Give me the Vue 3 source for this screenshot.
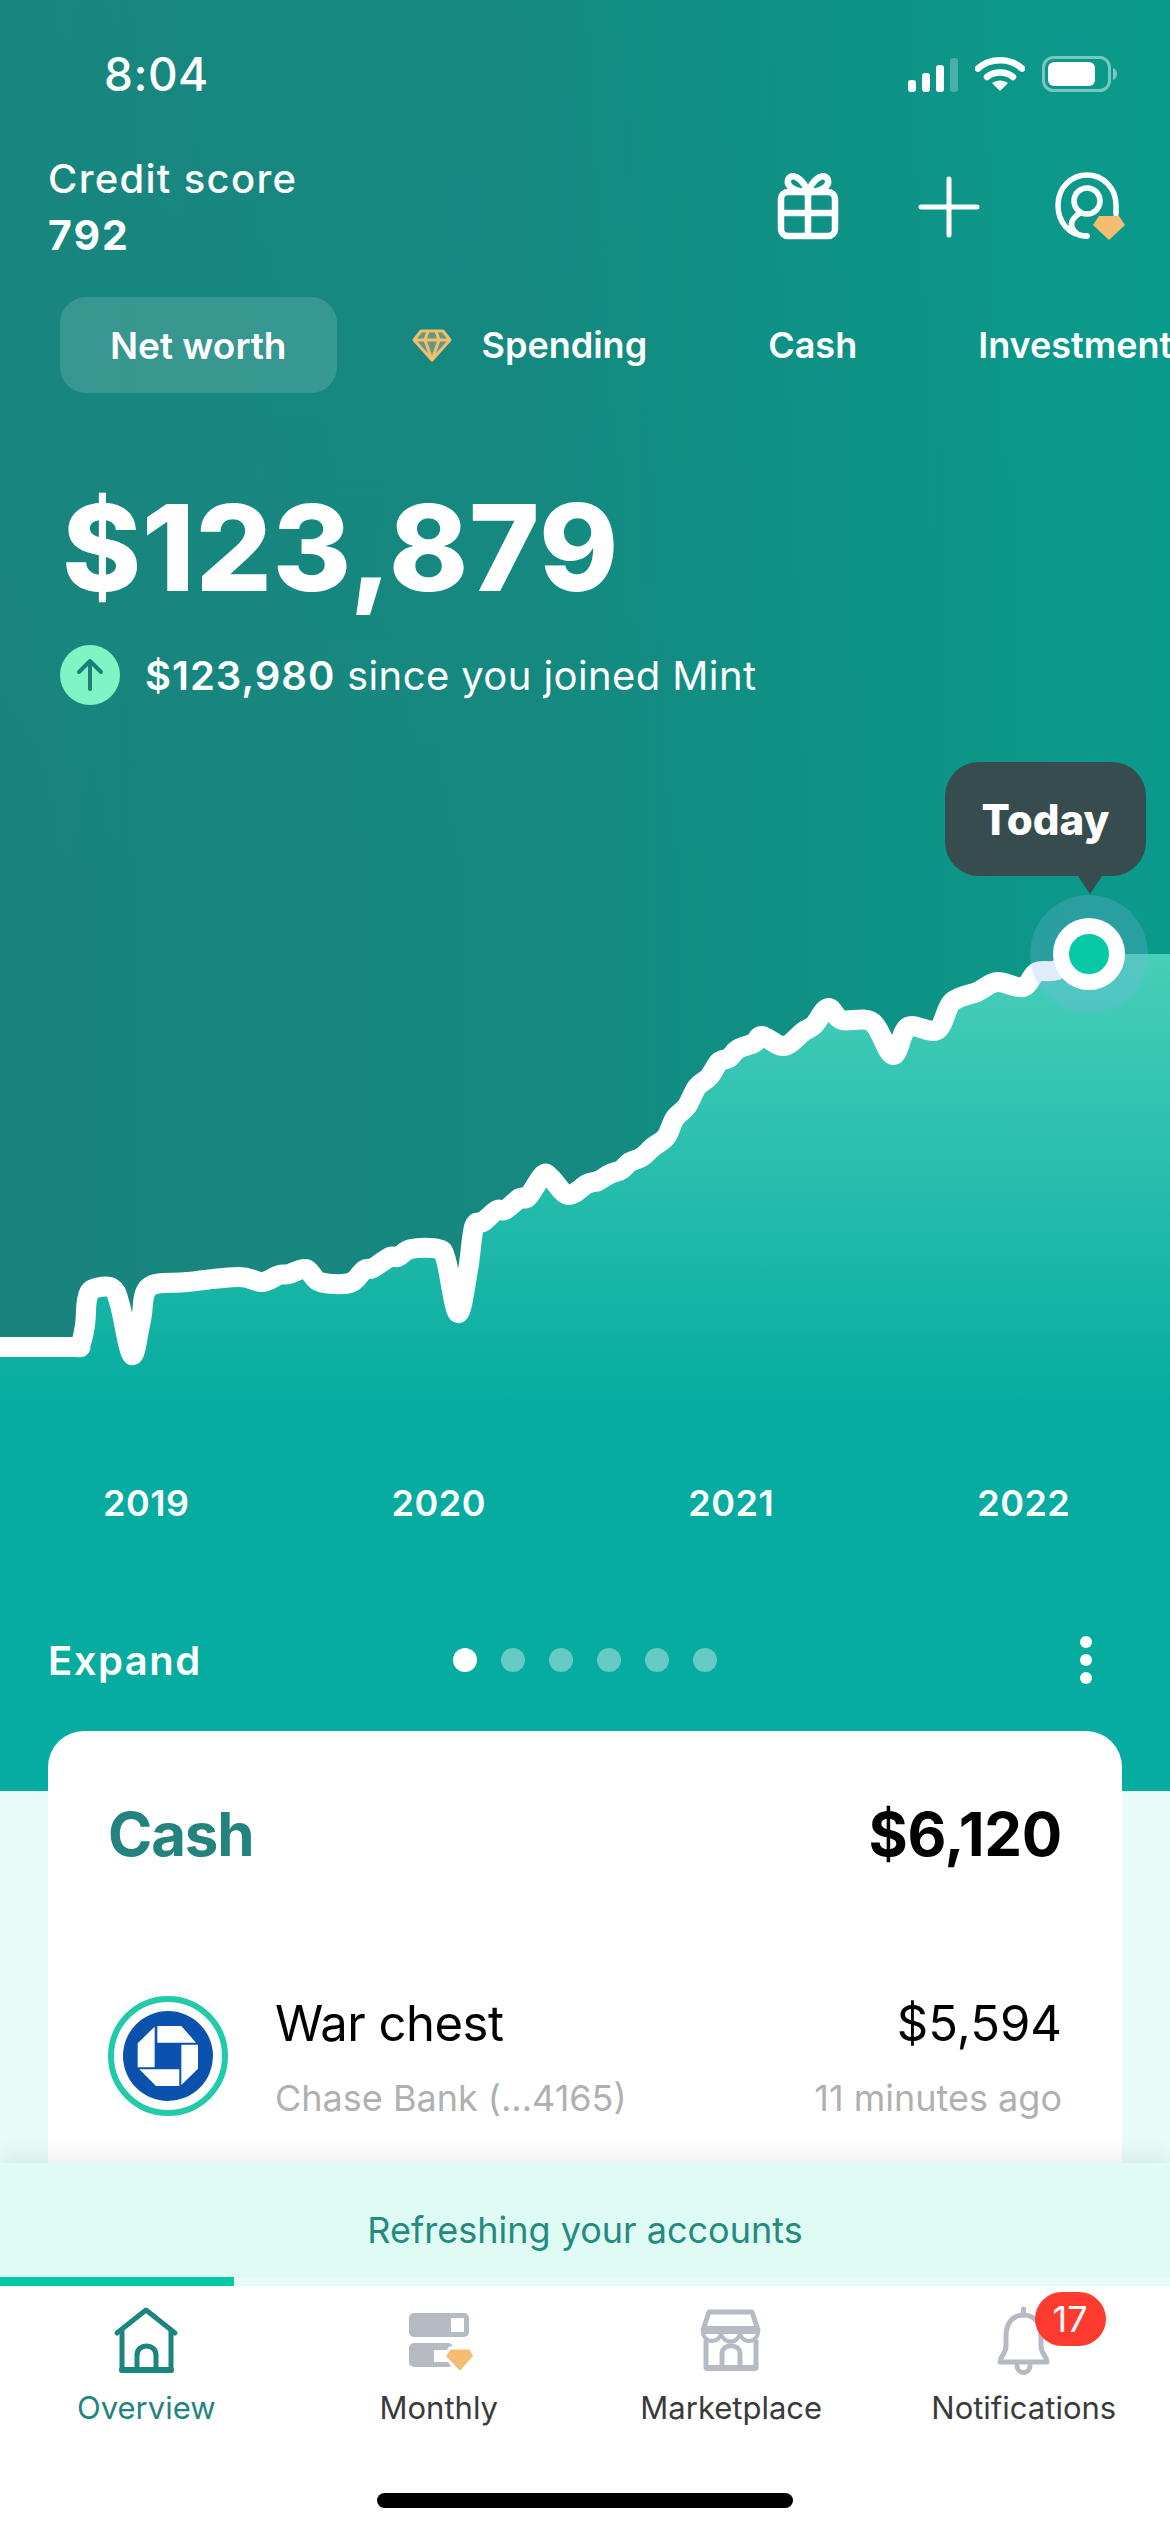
<script setup>
import { computed } from 'vue'

const points = [
  [-20,1347],[70,1347],[80,1345],[85,1325],[87,1300],[93,1289],[112,1288],[120,1305],[132,1355],[141,1320],[149,1287],[187,1282],[239,1277],[262,1282],[279,1275],[289,1274],[306,1269],[320,1282],[350,1283],[364,1270],[373,1268],[390,1257],[398,1257],[411,1249],[438,1249],[446,1260],[458,1313],[468,1270],[474,1227],[483,1222],[497,1210],[505,1210],[520,1198],[528,1197],[543,1175],[551,1178],[568,1195],[587,1184],[598,1181],[610,1174],[621,1170],[630,1162],[642,1157],[653,1147],[666,1137],[675,1118],[687,1106],[697,1087],[709,1077],[719,1062],[729,1058],[738,1049],[754,1043],[762,1036],[784,1046],[803,1032],[814,1025],[828,1008],[842,1020],[872,1022],[893,1055],[908,1027],[937,1030],[952,1002],[977,992],[997,982],[1023,987],[1037,972],[1057,970],[1089,954]
]

const linePath = computed(() => {
  const p = points
  let d = `M${p[0][0]} ${p[0][1]}`
  for (let i = 0; i < p.length - 1; i++) {
    const a = p[Math.max(0, i - 1)], b = p[i], c = p[i + 1], e = p[Math.min(p.length - 1, i + 2)]
    const c1 = [b[0] + (c[0] - a[0]) / 6, b[1] + (c[1] - a[1]) / 6]
    const c2 = [c[0] - (e[0] - b[0]) / 6, c[1] - (e[1] - b[1]) / 6]
    d += `C${c1[0].toFixed(1)} ${c1[1].toFixed(1)} ${c2[0].toFixed(1)} ${c2[1].toFixed(1)} ${c[0]} ${c[1]}`
  }
  return d
})
const areaPath = computed(() => `${linePath.value}L1190 954L1190 1430L-20 1430Z`)

const years = ['2019', '2020', '2021', '2022']
const dots = [0, 1, 2, 3, 4, 5]
</script>

<template>
  <div class="screen">
    <div class="main">
      <section class="hero">
        <div class="hero-top">
          <div class="status">
            <span class="time">8:04</span>
            <div class="status-icons">
              <svg class="sig" width="50" height="36" viewBox="0 0 50 36">
                <rect x="0" y="24" width="8" height="12" rx="3" fill="#fff"/>
                <rect x="14" y="17" width="8" height="19" rx="3" fill="#fff"/>
                <rect x="28" y="9" width="8" height="27" rx="3" fill="#fff"/>
                <rect x="42" y="2" width="8" height="34" rx="3" fill="#fff" opacity=".25"/>
              </svg>
              <svg width="50" height="36" viewBox="0 0 50 36">
                <path d="M3 12.500C15 1.500 35 1.500 47 12.500" fill="none" stroke="#fff" stroke-width="6.500" stroke-linecap="round"/>
                <path d="M12 21C19 15 31 15 38 21" fill="none" stroke="#fff" stroke-width="6.500" stroke-linecap="round"/>
                <path d="M25 35L17 27C22 23.500 28 23.500 33 27Z" fill="#fff"/>
              </svg>
              <svg width="76" height="36" viewBox="0 0 76 36">
                <rect x="1.500" y="1.500" width="66" height="33" rx="10" fill="none" stroke="#fff" stroke-opacity=".45" stroke-width="3"/>
                <rect x="6" y="6" width="47" height="24" rx="6" fill="#fff"/>
                <path d="M71 12C74 13 75 15.500 75 18C75 20.500 74 23 71 24Z" fill="#fff" opacity=".45"/>
              </svg>
            </div>
          </div>

          <header class="head">
            <div class="score">
              <div class="score-label">Credit score</div>
              <div class="score-value">792</div>
            </div>
            <div class="head-icons">
              <svg width="80" height="80" viewBox="0 0 80 80" fill="none" stroke="#fff" stroke-width="6.500">
                <path d="M40 25C34 10 23 5 20 13C18 21 30 25 40 25C50 25 62 21 60 13C57 5 46 10 40 25"/>
                <rect x="13" y="25" width="54" height="44" rx="7"/>
                <path d="M13 46H67M40 25V69"/>
              </svg>
              <svg width="80" height="80" viewBox="0 0 80 80" fill="none" stroke="#fff" stroke-width="5" stroke-linecap="round">
                <path d="M12 40H68M40 12V68"/>
              </svg>
              <svg width="80" height="80" viewBox="0 0 80 80" fill="none" stroke="#fff" stroke-width="5.500" stroke-linecap="round">
                <path d="M37 69C18 69 8 54 8 38C8 21 21 8 37 8C53 8 66 21 66 38V47"/>
                <circle cx="37" cy="34" r="13"/>
                <path d="M30 46C24 50 20 55 22 60C24 66 30 69 37 69"/>
                <path d="M49 49H69L75 58L59 73L43 58Z" fill="#f4bd72" stroke="none"/>
              </svg>
            </div>
          </header>

          <nav class="tabs">
            <div class="tab active">Net worth</div>
            <div class="tab">
              <svg class="gem" width="40" height="33" viewBox="0 0 40 33" fill="none" stroke="#f4bd72" stroke-width="3" stroke-linejoin="round">
                <path d="M9 2H31L38 11L20 31L2 11Z" fill="#f4bd72" fill-opacity=".35"/>
                <path d="M2 11H38M13 11L20 31L27 11M13 11L16 2M27 11L24 2"/>
              </svg>
              Spending
            </div>
            <div class="tab">Cash</div>
            <div class="tab">Investments</div>
          </nav>

          <div class="amount">$123,879</div>
          <div class="delta">
            <span class="delta-icon">
              <svg width="36" height="36" viewBox="0 0 36 36" fill="none" stroke="#1b7f76" stroke-width="4" stroke-linecap="round" stroke-linejoin="round">
                <path d="M18 32V5M7 15L18 4L29 15"/>
              </svg>
            </span>
            <span class="delta-text"><b>$123,980</b> since you joined Mint</span>
          </div>

          <div class="chart">
            <svg class="chart-svg" width="1170" height="680" viewBox="0 740 1170 680">
              <defs>
                <linearGradient id="fillGrad" gradientUnits="userSpaceOnUse" x1="0" y1="954" x2="0" y2="1400">
                  <stop offset="0" stop-color="#47cfb9"/>
                  <stop offset="1" stop-color="#07aca0"/>
                </linearGradient>
              </defs>
              <path :d="areaPath" fill="url(#fillGrad)"/>
              <path :d="linePath" fill="none" stroke="#fff" stroke-width="20" stroke-linecap="round" stroke-linejoin="round"/>
              <circle cx="1089" cy="954" r="59" fill="#82b4e6" fill-opacity=".25"/>
              <circle cx="1089" cy="954" r="28" fill="#07c9a6" stroke="#fff" stroke-width="16"/>
            </svg>
            <div class="tooltip">Today</div>
          </div>
        </div>

        <div class="hero-bottom">
          <div class="years">
            <span v-for="y in years" :key="y">{{ y }}</span>
          </div>
          <div class="controls">
            <span class="expand">Expand</span>
            <div class="dots">
              <i v-for="d in dots" :key="d" class="dot" :class="{ on: d === 0 }"></i>
            </div>
            <div class="kebab"><i></i><i></i><i></i></div>
          </div>
        </div>
      </section>

      <section class="card">
        <div class="card-head">
          <span class="card-title">Cash</span>
          <span class="card-total">$6,120</span>
        </div>
        <div class="account">
          <svg class="logo" width="120" height="120" viewBox="84 78 360 360">
            <circle cx="264" cy="258" r="171" fill="#fff" stroke="#1fcba9" stroke-width="18"/>
            <circle cx="264" cy="258" r="135" fill="#0a52ad"/>
            <path d="M232 168H304L348 218H232Z" fill="#fff"/>
            <path d="M354 224V296L304 345V224Z" fill="#fff"/>
            <path d="M298 298V348H228L178 298Z" fill="#fff"/>
            <path d="M224 170V292H173V220Z" fill="#fff"/>
          </svg>
          <div class="acc-body">
            <div class="acc-line">
              <span class="acc-name">War chest</span>
              <span class="acc-value">$5,594</span>
            </div>
            <div class="acc-line sub">
              <span>Chase Bank (...4165)</span>
              <span>11 minutes ago</span>
            </div>
          </div>
        </div>
      </section>
    </div>

    <div class="banner">
      <div class="banner-text">Refreshing your accounts</div>
      <div class="track"><div class="progress"></div></div>
    </div>

    <footer class="nav">
      <div class="nav-row">
        <div class="nav-item current">
          <svg width="70" height="70" viewBox="0 0 70 70" fill="none" stroke="#1c8580" stroke-width="5" stroke-linejoin="round" stroke-linecap="round">
            <path d="M6 27L35 4L64 27"/>
            <path d="M11 25V64H26V49C26 37 45 37 45 49V64H60V25"/>
            <path d="M11 64H60" stroke-width="6"/>
          </svg>
          <span>Overview</span>
        </div>
        <div class="nav-item">
          <svg width="70" height="70" viewBox="0 0 70 70">
            <rect x="5" y="7" width="60" height="24" rx="5" fill="#b6bac3"/>
            <rect x="47" y="12" width="13" height="14" fill="#fff"/>
            <rect x="5" y="37" width="44" height="24" rx="5" fill="#b6bac3"/>
            <rect x="30" y="44" width="22" height="12" fill="#fff"/>
            <path d="M46 42H66L71 50L56 67L40 50Z" fill="#f4bd72" stroke="#fff" stroke-width="3"/>
          </svg>
          <span>Monthly</span>
        </div>
        <div class="nav-item">
          <svg width="70" height="70" viewBox="0 0 70 70" fill="none" stroke="#b6bac3" stroke-width="5" stroke-linejoin="round">
            <path d="M13 6H56L62 24H7Z"/>
            <path d="M7 24H62" stroke-width="8"/>
            <path d="M7 26A9 9 0 0 0 25 26A9.500 9.500 0 0 0 44 26A9 9 0 0 0 62 26" stroke-width="4"/>
            <path d="M10 34V62H26V48C26 37 44 37 44 48V62H60V34"/>
            <path d="M10 62H60" stroke-width="6"/>
          </svg>
          <span>Marketplace</span>
        </div>
        <div class="nav-item">
          <svg width="70" height="70" viewBox="0 0 70 70" fill="none" stroke="#b6bac3" stroke-width="5" stroke-linejoin="round" stroke-linecap="round">
            <path d="M34.500 9C23 9 17 18 17 30V40C17 48 11 50 11 56H58C58 50 52 48 52 40V30C52 18 46 9 34.500 9Z"/>
            <path d="M34.500 3V9"/>
            <path d="M28 60A6.500 6.500 0 0 0 41 60"/>
          </svg>
          <span>Notifications</span>
          <em class="badge">17</em>
        </div>
      </div>
      <div class="home-bar"></div>
    </footer>
  </div>
</template>

<style>
html, body { margin: 0; padding: 0; background: #fff; }
</style>

<style scoped>
.screen {
  width: 1170px;
  height: 2532px;
  display: flex;
  flex-direction: column;
  overflow: hidden;
  background: #fff;
  font-family: Inter, "Noto Sans", sans-serif;
  color: #fff;
}
.main {
  height: 2163px;
  flex: none;
  overflow: hidden;
  background: #e8fbf9;
}
.hero { display: flex; flex-direction: column; height: 1791px; }
.hero-top {
  height: 1420px;
  flex: none;
  background:
    linear-gradient(180deg, rgba(10, 160, 140, .08) 0, rgba(10, 160, 140, 0) 900px),
    linear-gradient(90deg, #19847d 0, #15887f 45%, #0c9688 85%, #0a9a8b 100%);
}
.status {
  height: 148px;
  display: flex;
  align-items: center;
  justify-content: space-between;
  padding: 0 52px 0 104px;
}
.time { font-size: 46px; font-weight: 500; letter-spacing: .5px; }
.status-icons { display: flex; align-items: center; gap: 17px; }
.head {
  height: 149px;
  display: flex;
  justify-content: space-between;
  padding: 2px 40px 0 48px;
  box-sizing: border-box;
}
.score-label { font-size: 40px; font-weight: 500; line-height: 57px; letter-spacing: 1.300px; }
.score-value { font-size: 41px; font-weight: 700; line-height: 57px; letter-spacing: 2px; }
.head-icons { display: flex; gap: 61px; margin-top: 17px; }
.tabs {
  display: flex;
  height: 96px;
  gap: 21px;
  padding-left: 60px;
  white-space: nowrap;
  overflow: hidden;
}
.tab {
  display: flex;
  align-items: center;
  padding: 0 50px;
  border-radius: 26px;
  font-size: 36px;
  font-weight: 600;
}
.tab.active { background: rgba(255, 255, 255, .14); font-size: 37px; margin-right: 4px; }
.gem { margin-right: 30px; }
.amount {
  margin-top: 85px;
  padding-left: 62px;
  font-size: 120px;
  line-height: 140px;
  font-weight: 800;
  letter-spacing: .6px;
}
.delta {
  margin-top: 27px;
  padding-left: 60px;
  height: 60px;
  display: flex;
  align-items: center;
  gap: 25px;
}
.delta-icon {
  width: 60px;
  height: 60px;
  border-radius: 50%;
  background: #7ff5c4;
  display: flex;
  align-items: center;
  justify-content: center;
}
.delta-text { font-size: 40px; letter-spacing: .4px; }
.delta-text b { font-weight: 600; letter-spacing: 1px; }
.chart { position: relative; margin-top: 35px; height: 680px; }
.chart-svg { display: block; }
.tooltip {
  position: absolute;
  left: 945px;
  top: 22px;
  width: 201px;
  height: 114px;
  border-radius: 34px;
  background: #374c4e;
  display: flex;
  align-items: center;
  justify-content: center;
  font-size: 42px;
  font-weight: 800;
}
.tooltip::after {
  content: "";
  position: absolute;
  left: 133px;
  top: 114px;
  border-left: 12px solid transparent;
  border-right: 12px solid transparent;
  border-top: 18px solid #374c4e;
}
.hero-bottom { flex: 1; background: #07aca0; padding-top: 60px; box-sizing: border-box; }
.years {
  display: grid;
  grid-template-columns: repeat(4, 1fr);
  text-align: center;
  font-size: 36px;
  font-weight: 600;
  line-height: 46px;
  letter-spacing: .5px;
}
.controls {
  margin-top: 111px;
  height: 46px;
  display: flex;
  align-items: center;
  padding: 0 78px 0 48px;
}
.expand { width: 405px; font-size: 40px; font-weight: 600; letter-spacing: 1.500px; }
.dots { display: flex; gap: 24px; }
.dot { width: 24px; height: 24px; border-radius: 50%; background: rgba(255, 255, 255, .38); }
.dot.on { background: #fff; }
.kebab { margin-left: auto; display: flex; flex-direction: column; gap: 6px; }
.kebab i { width: 12px; height: 12px; border-radius: 50%; background: #fff; }
.card {
  position: relative;
  margin: -60px 48px 0;
  height: 500px;
  padding: 68px 60px 0 60px;
  box-sizing: border-box;
  background: #fff;
  border-radius: 36px 36px 0 0;
  color: #000;
}
.card-head { display: flex; justify-content: space-between; align-items: center; height: 70px; }
.card-title { font-size: 60px; font-weight: 700; color: #23837e; letter-spacing: -1.200px; }
.card-total { font-size: 60px; font-weight: 700; letter-spacing: -.3px; }
.account { display: flex; gap: 47px; margin-top: 127px; }
.logo { flex: none; display: block; }
.acc-body { flex: 1; margin-top: -3px; }
.acc-line { display: flex; justify-content: space-between; align-items: center; height: 60px; font-size: 49px; }
.acc-name { letter-spacing: -.5px; }
.acc-line.sub { height: 50px; margin-top: 20px; font-size: 36px; color: #b0b0b0; }
.banner {
  position: relative;
  height: 123px;
  flex: none;
  display: flex;
  flex-direction: column;
  background: #defbf4;
  box-shadow: 0 -8px 20px rgba(0, 0, 0, .07);
}
.banner-text {
  flex: 1;
  display: flex;
  align-items: center;
  justify-content: center;
  padding-top: 20px;
  font-size: 36px;
  color: #258a7e;
}
.track { height: 9px; background: #e6fcf6; }
.progress { width: 234px; height: 100%; background: #07c9a6; }
.nav { position: relative; flex: 1; display: flex; flex-direction: column; background: #fff; }
.nav-row { display: grid; grid-template-columns: repeat(4, 1fr); padding-top: 20px; }
.nav-item {
  position: relative;
  display: flex;
  flex-direction: column;
  align-items: center;
  gap: 12px;
  font-size: 31px;
  line-height: 40px;
  color: #3a3a3c;
}
.nav-item svg { display: block; overflow: visible; }
.nav-item.current { color: #1f8580; }
.badge {
  position: absolute;
  left: 157px;
  top: -14px;
  width: 71px;
  height: 54px;
  border-radius: 27px;
  background: #ff3b30;
  color: #fff;
  font-style: normal;
  font-size: 36px;
  line-height: 54px;
  text-align: center;
}
.home-bar {
  width: 416px;
  height: 15px;
  margin: 65px auto 0;
  border-radius: 8px;
  background: #000;
}
</style>
